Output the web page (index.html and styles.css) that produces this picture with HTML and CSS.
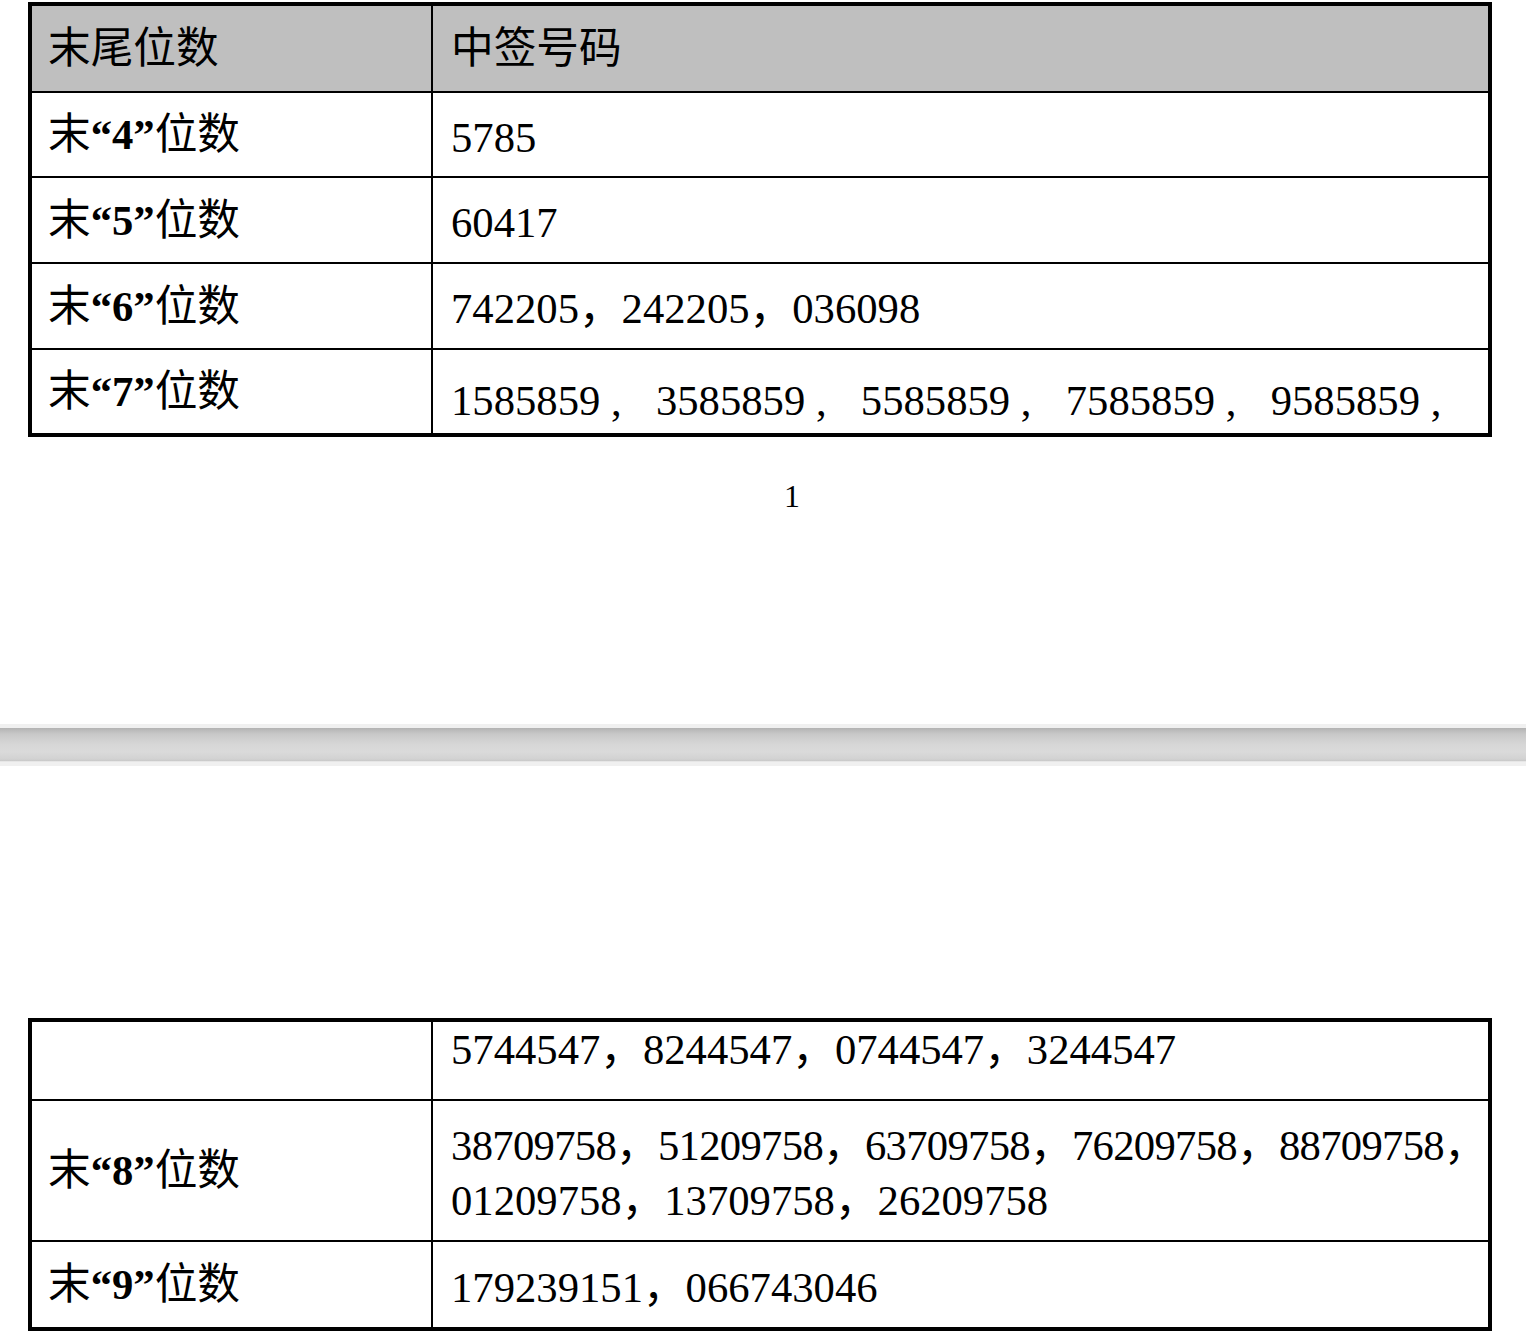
FILE: index.html
```html
<!DOCTYPE html>
<html lang="zh-CN">
<head>
<meta charset="utf-8">
<title>中签号码</title>
<link rel="stylesheet" href="styles.css">
</head>
<body>
<div class="page page-first">
  <div class="tbl">
    <div class="row row-head">
      <div class="cell cell-label"><span class="txt">末尾位数</span></div>
      <div class="cell cell-num"><span class="txt">中签号码</span></div>
    </div>
    <div class="row row-85">
      <div class="cell cell-label"><span class="txt">末<b>“4”</b>位数</span></div>
      <div class="cell cell-num cell-shift"><span class="txt">5785</span></div>
    </div>
    <div class="row row-86">
      <div class="cell cell-label"><span class="txt">末<b>“5”</b>位数</span></div>
      <div class="cell cell-num cell-shift"><span class="txt">60417</span></div>
    </div>
    <div class="row row-86">
      <div class="cell cell-label"><span class="txt">末<b>“6”</b>位数</span></div>
      <div class="cell cell-num cell-shift"><span class="txt">742205，242205，036098</span></div>
    </div>
    <div class="row row-85">
      <div class="cell cell-label"><span class="txt">末<b>“7”</b>位数</span></div>
      <div class="cell cell-num cell-top cell-top-23"><span class="txt"><span class="code-sp">1585859 ,</span><span class="code-sp">3585859 ,</span><span class="code-sp">5585859 ,</span><span class="code-sp">7585859 ,</span><span>9585859 ,</span></span></div>
    </div>
  </div>
  <div class="page-no">1</div>
</div>
<div class="page-sep"></div>
<div class="page page-second">
  <div class="tbl">
    <div class="row row-77">
      <div class="cell cell-label"></div>
      <div class="cell cell-num cell-top"><span class="txt">5744547，8244547，0744547，3244547</span></div>
    </div>
    <div class="row row-141">
      <div class="cell cell-label"><span class="txt">末<b>“8”</b>位数</span></div>
      <div class="cell cell-num"><div class="lines"><span class="line-tight">38709758，51209758，63709758，76209758，88709758，</span><br>01209758，13709758，26209758</div></div>
    </div>
    <div class="row row-87">
      <div class="cell cell-label"><span class="txt">末<b>“9”</b>位数</span></div>
      <div class="cell cell-num cell-shift"><span class="txt">179239151，066743046</span></div>
    </div>
  </div>
</div>
</body>
</html>
```
FILE: styles.css
```css
* {
  box-sizing: border-box;
}

html, body {
  margin: 0;
  padding: 0;
  background: #ffffff;
}

body {
  font-family: "Liberation Serif", "Noto Sans CJK SC", serif;
  color: #000000;
}

.page-first {
  height: 724px;
  padding: 2px 0 0 28px;
}

.page-second {
  height: 570px;
  padding: 252px 0 0 28px;
}

.page-sep {
  height: 42px;
  background: linear-gradient(to bottom,
    #f0f0f0 0, #f0f0f0 4px,
    #b3b3b3 4px, #c8c8c8 10px, #d6d6d6 20px, #dadada 28px,
    #d2d2d2 35px, #c8c8c8 37px, #e6e6e6 37px, #e6e6e6 38px,
    #f0f0f0 38px, #f0f0f0 42px);
}

.tbl {
  width: 1464px;
  border: 4px solid #000000;
  font-size: 42.67px;
  line-height: 55px;
}

.row {
  display: grid;
  grid-template-columns: 401px 1fr;
  border-top: 2px solid #000000;
}

.row:first-child {
  border-top: 0;
}

.row-head {
  height: 85px;
  background: #bfbfbf;
}

.row-77 { height: 77px; }
.row-85 { height: 85px; }
.row-86 { height: 86px; }
.row-87 { height: 87px; }
.row-141 { height: 141px; }

.cell {
  display: flex;
  align-items: center;
  white-space: nowrap;
  min-width: 0;
}

.cell-label {
  border-right: 2px solid #000000;
  padding-left: 16px;
}

.cell-num {
  padding-left: 18px;
}

.cell-shift {
  padding-top: 5px;
}

.cell-top {
  align-items: flex-start;
}

.cell-top-23 {
  padding-top: 23px;
}

.txt b {
  font-weight: 700;
}

.code-sp {
  margin-right: 34.3px;
}

.lines {
  line-height: 55px;
  padding-top: 4px;
}

.line-tight {
  letter-spacing: -0.7px;
}

.page-no {
  margin: 43px 0 0 756px;
  font-size: 32px;
  line-height: 32px;
}
```
